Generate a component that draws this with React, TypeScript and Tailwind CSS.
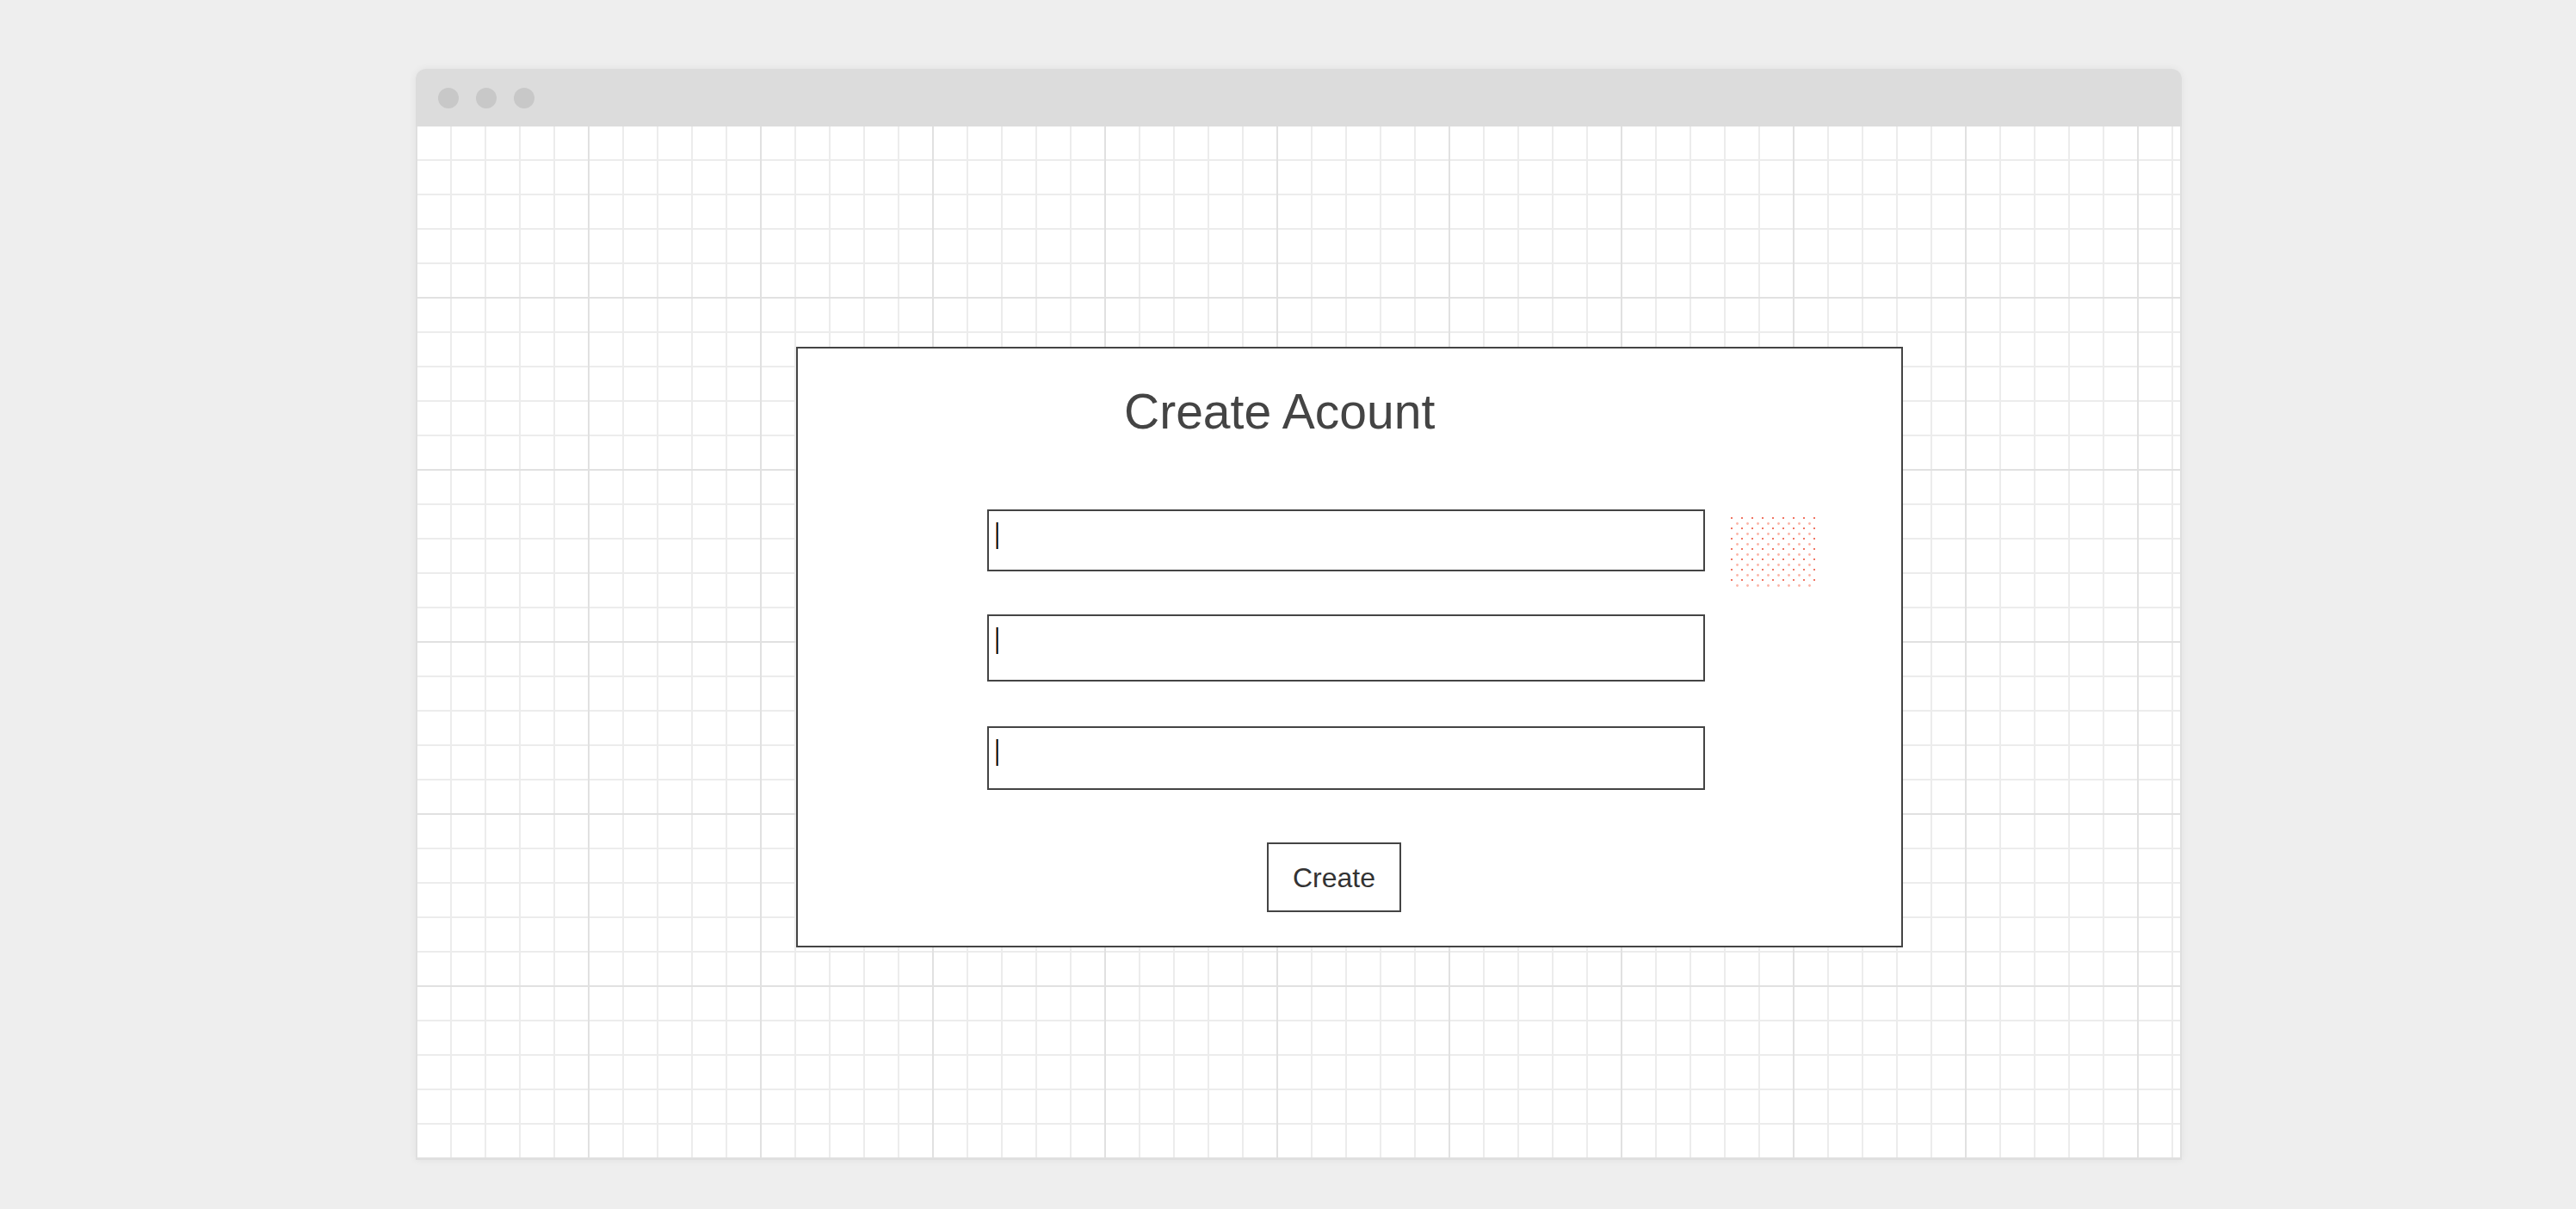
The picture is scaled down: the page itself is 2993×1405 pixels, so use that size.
import React from "react";

function Cursor() {
  return (
    <div className="ml-[8px] mt-[13px] flex h-[31px] w-[3px]">
      <span className="h-full w-[1px] bg-[#d98a4a]" />
      <span className="h-full w-[1px] bg-[#050505]" />
      <span className="h-full w-[1px] bg-[#1a5a90]" />
    </div>
  );
}

function Field({ h }: { h: string }) {
  return (
    <div className={`flex w-[834px] items-start border-2 border-[#444444] bg-white ${h}`}>
      <Cursor />
    </div>
  );
}

function DotPattern() {
  return (
    <svg width="98" height="81" viewBox="0 0 98 81" className="ml-[30px] mt-[9px] shrink-0">
      <defs>
        <pattern id="dots" x="0" y="0" width="12" height="12" patternUnits="userSpaceOnUse">
          <rect x="0" y="0" width="2" height="2" fill="#f07462" />
          <circle cx="7.5" cy="7.5" r="1.4" fill="#fbb4a6" />
        </pattern>
      </defs>
      <rect x="0" y="0" width="98" height="81" fill="url(#dots)" />
    </svg>
  );
}

export default function App() {
  return (
    <div className="h-[1405px] w-full overflow-hidden bg-[#eeeeee] pt-[80px] pl-[483px] font-['Liberation_Sans',Arial,sans-serif]">
      <div className="flex w-[2052px] flex-col shadow-[0_0_10px_rgba(0,0,0,0.06)] rounded-t-[12px]">
        {/* title bar */}
        <div className="flex h-[67px] items-center gap-[20px] rounded-t-[12px] bg-[#dcdcdc] pl-[26px]">
          <span className="h-[24px] w-[24px] rounded-full bg-[#c8c8c8]" />
          <span className="h-[24px] w-[24px] rounded-full bg-[#c8c8c8]" />
          <span className="h-[24px] w-[24px] rounded-full bg-[#c8c8c8]" />
        </div>
        {/* canvas */}
        <div className="h-[1201px] border-x-2 border-b-2 border-[#dfdfdf] bg-white bg-[image:linear-gradient(to_right,transparent_198px,#e1e1e1_198px,#e1e1e1_200px,transparent_200px),linear-gradient(to_bottom,transparent_198px,#e1e1e1_198px,#e1e1e1_200px,transparent_200px),linear-gradient(to_right,transparent_38px,#ececec_38px,#ececec_40px,transparent_40px),linear-gradient(to_bottom,transparent_38px,#ececec_38px,#ececec_40px,transparent_40px)] bg-[size:200px_200px,200px_200px,40px_40px,40px_40px] pt-[256px] pl-[440px]">
          {/* dialog */}
          <div className="flex h-[698px] w-[1286px] flex-col border-2 border-[#444444] bg-white">
            <div className="ml-[379px] mt-[45px] h-[57px] text-[57px] leading-[57px] text-[#444444] whitespace-nowrap">
              Create Acount
            </div>
            <div className="ml-[220px] mt-[85px] flex h-[72px] items-start">
              <Field h="h-[72px]" />
              <DotPattern />
            </div>
            <div className="ml-[220px] mt-[50px]">
              <Field h="h-[78px]" />
            </div>
            <div className="ml-[220px] mt-[52px]">
              <Field h="h-[74px]" />
            </div>
            <div className="ml-[545px] mt-[61px]">
              <button className="flex h-[81px] w-[156px] items-center justify-center border-2 border-[#444444] bg-white text-[32px] text-[#333333]">
                Create
              </button>
            </div>
          </div>
        </div>
      </div>
    </div>
  );
}
